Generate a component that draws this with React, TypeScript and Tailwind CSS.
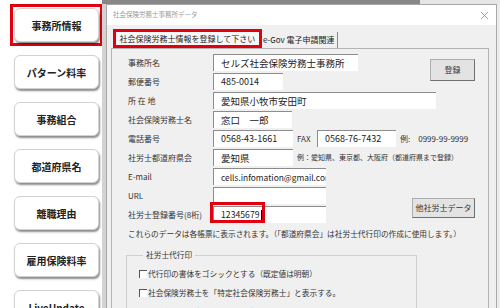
import React from "react";

const menuItems = [
  "事務所情報",
  "パターン料率",
  "事務組合",
  "都道府県名",
  "離職理由",
  "雇用保険料率",
  "LiveUpdate",
];

function SideButton({ label }: { label: string }) {
  return (
    <div className="flex h-[34px] w-[85px] shrink-0 items-center justify-center rounded-[6px] border border-[#d2d2d2] bg-white text-[10px] font-bold text-[#222] shadow-[1px_2px_2px_rgba(0,0,0,0.45)]">
      {label}
    </div>
  );
}

function Field({
  w,
  size = "text-[9px]",
  children,
}: {
  w: string;
  size?: string;
  children?: React.ReactNode;
}) {
  return (
    <div
      className={`relative flex h-[17px] shrink-0 items-center overflow-hidden whitespace-nowrap border-l border-t border-[#8c8c8c] bg-white pl-[7px] text-[#222] ${size} ${w}`}
    >
      {children}
    </div>
  );
}

function Label({ children }: { children: React.ReactNode }) {
  return (
    <span className="w-[85px] shrink-0 whitespace-nowrap text-[8px] text-[#333]">
      {children}
    </span>
  );
}

function CheckRow({ children }: { children: React.ReactNode }) {
  return (
    <div className="flex h-[12px] shrink-0 items-center">
      <span className="h-[8px] w-[8px] shrink-0 border-l border-t border-[#555] bg-white" />
      <span className="ml-[1px] whitespace-nowrap text-[7.7px] text-[#333]">
        {children}
      </span>
    </div>
  );
}

export default function App() {
  return (
    <div className="flex h-[308px] w-[500px] overflow-hidden bg-white font-['Noto_Sans_CJK_JP','Noto_Sans',sans-serif]">
      {/* Left menu */}
      <div className="flex w-[102px] shrink-0 flex-col items-start gap-[13px] pl-[14px] pt-[8px]">
        {menuItems.map((item, i) =>
          i === 0 ? (
            <div
              key={item}
              className="-m-[4px] shrink-0 border-[3px] border-[#e0000f] p-[1px]"
            >
              <SideButton label={item} />
            </div>
          ) : (
            <SideButton key={item} label={item} />
          )
        )}
      </div>

      {/* Right area */}
      <div className="flex flex-1 flex-col">
        <div className="flex h-[4px] shrink-0">
          <div className="w-[318px] bg-[#878787]" />
          <div className="flex-1 bg-[#e6e6e6]" />
        </div>
        <div className="flex flex-1">
          <div className="w-[4px] shrink-0 bg-[#d3d3d3]" />

          {/* Dialog */}
          <div className="flex w-[391px] shrink-0 flex-col border-x border-t border-[#a8a8a8]">
            <div className="flex h-[20px] shrink-0 items-center justify-between bg-white pl-[6px] pr-[7px]">
              <span className="text-[6.5px] text-[#9a9a9a]">
                社会保険労務士事務所データ
              </span>
              <svg width="9" height="9" viewBox="0 0 9 9">
                <path d="M1 1L8 8M8 1L1 8" stroke="#8a8a8a" strokeWidth="0.8" />
              </svg>
            </div>

            <div className="flex flex-1 flex-col bg-[#f0f0f0] pl-[4px] pr-[7px] pt-[4px]">
              {/* Tabs */}
              <div className="flex h-[19px] shrink-0 items-end pl-[2px]">
                <div className="flex h-[19px] w-[149px] items-center justify-center border-[3px] border-[#e0000f] bg-[#f7f7f7] text-[8px] text-[#222]">
                  社会保険労務士情報を登録して下さい
                </div>
                <div className="flex h-[16px] items-center border-r border-[#8a8a8a] pl-[1px] pr-[2px] text-[8px] text-[#222]">
                  e-Gov 電子申請関連
                </div>
              </div>

              {/* Panel */}
              <div className="flex flex-1 flex-col border border-[#b4b4b4] pl-[16px] pr-[13px] pt-[5px]">
                <div className="flex shrink-0 flex-col gap-[2px]">
                  <div className="flex h-[17px] items-center">
                    <Label>事務所名</Label>
                    <Field w="w-[145px]" size="text-[9.5px]">
                      セルズ社会保険労務士事務所
                    </Field>
                    <button className="ml-auto mt-[5px] h-[22px] w-[45px] self-start border border-[#adadad] border-b-[#707070] border-r-[#707070] bg-[#e3e3e3] text-[8px] text-[#333]">
                      登録
                    </button>
                  </div>
                  <div className="flex h-[17px] items-center">
                    <Label>郵便番号</Label>
                    <Field w="w-[70px]">485-0014</Field>
                  </div>
                  <div className="flex h-[17px] items-center">
                    <Label>所 在 地</Label>
                    <Field w="w-[223px]" size="text-[9.5px]">
                      愛知県小牧市安田町
                    </Field>
                  </div>
                  <div className="flex h-[17px] items-center">
                    <Label>社会保険労務士名</Label>
                    <Field w="w-[79px]" size="text-[9.5px]">
                      窓口　一郎
                    </Field>
                  </div>
                  <div className="flex h-[17px] items-center">
                    <Label>電話番号</Label>
                    <Field w="w-[80px]">0568-43-1661</Field>
                    <span className="ml-[4px] w-[20px] text-[8px] text-[#333]">
                      FAX
                    </span>
                    <Field w="w-[79px]">0568-76-7432</Field>
                    <span className="ml-[4px] whitespace-nowrap text-[8px] text-[#333]">
                      例:　0999-99-9999
                    </span>
                  </div>
                  <div className="flex h-[17px] items-center">
                    <Label>社労士都道府県会</Label>
                    <Field w="w-[80px]" size="text-[9.5px]">
                      愛知県
                    </Field>
                    <span className="ml-[4px] whitespace-nowrap text-[7px] text-[#333]">
                      例：愛知県、東京都、大阪府（都道府県まで登録）
                    </span>
                  </div>
                  <div className="flex h-[17px] items-center">
                    <Label>E-mail</Label>
                    <Field w="w-[113px]" size="text-[8.4px]">
                      cells.infomation@gmail.com
                    </Field>
                  </div>
                  <div className="flex h-[17px] items-center">
                    <Label>URL</Label>
                    <Field w="w-[113px]" />
                  </div>
                  <div className="flex h-[17px] items-center">
                    <Label>社労士登録番号(8桁)</Label>
                    <div className="relative h-[17px] w-[113px] shrink-0">
                      <Field w="w-[113px]" size="text-[8.7px]">
                        12345679
                        <span className="ml-[1px] h-[11px] w-[1px] bg-black" />
                      </Field>
                      <div className="absolute -left-[3px] -top-[4px] h-[21px] w-[55px] border-[3px] border-[#e0000f]" />
                    </div>
                    <button className="-mt-[8px] ml-auto h-[20px] w-[63px] self-start border border-[#adadad] border-b-[#707070] border-r-[#707070] bg-[#e3e3e3] text-[8px] text-[#333]">
                      他社労士データ
                    </button>
                  </div>
                </div>

                <p className="mt-[5px] h-[12px] shrink-0 whitespace-nowrap text-[7.7px] leading-[12px] text-[#333]">
                  これらのデータは各帳票に表示されます。（「都道府県会」は社労士代行印の作成に使用します。）
                </p>

                <fieldset className="-ml-[2px] mt-[10px] w-[291px] shrink-0 border border-[#cfcfcf] pb-[10px] pl-[12px] pt-[8px]">
                  <legend className="ml-[4px] px-[3px] text-[7.7px] leading-[10px] text-[#333]">
                    社労士代行印
                  </legend>
                  <div className="flex flex-col gap-[7px]">
                    <CheckRow>代行印の書体をゴシックとする（既定値は明朝）</CheckRow>
                    <CheckRow>社会保険労務士を「特定社会保険労務士」と表示する。</CheckRow>
                    <CheckRow>代行印欄を「事務代理者」と表示する。</CheckRow>
                  </div>
                </fieldset>
              </div>
            </div>
          </div>
          <div className="flex-1 bg-[#ececec]" />
        </div>
      </div>
    </div>
  );
}
